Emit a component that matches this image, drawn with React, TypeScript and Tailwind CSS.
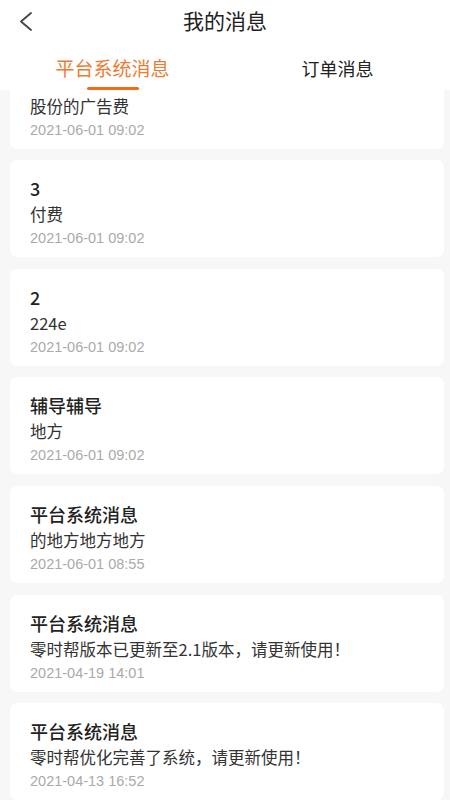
import { useState } from "react"

type Message = {
  id: number
  title: string
  content: string
  time: string
}

// first item is scrolled partly under the tab bar, only its lower half shows
const partial = { content: "股份的广告费", time: "2021-06-01 09:02" }

const messages: Message[] = [
  { id: 2, title: "3", content: "付费", time: "2021-06-01 09:02" },
  { id: 3, title: "2", content: "224e", time: "2021-06-01 09:02" },
  { id: 4, title: "辅导辅导", content: "地方", time: "2021-06-01 09:02" },
  { id: 5, title: "平台系统消息", content: "的地方地方地方", time: "2021-06-01 08:55" },
  { id: 6, title: "平台系统消息", content: "零时帮版本已更新至2.1版本，请更新使用！", time: "2021-04-19 14:01" },
  { id: 7, title: "平台系统消息", content: "零时帮优化完善了系统，请更新使用！", time: "2021-04-13 16:52" },
]

const tabs = ["平台系统消息", "订单消息"]

const dateFont = { fontFamily: '"Liberation Sans", Arial, sans-serif' }

export default function App() {
  const [activeTab, setActiveTab] = useState(0)

  return (
    <div
      className="w-[450px] h-[800px] overflow-hidden flex flex-col bg-[#f7f7f7]"
      style={{ fontFamily: '"Noto Sans CJK SC", "Noto Sans", sans-serif' }}
    >
      {/* header */}
      <div className="relative h-[42px] bg-white flex items-center justify-center shrink-0">
        <button className="absolute left-[16px] top-[9px] w-[20px] h-[24px] flex items-center justify-center">
          <svg width="16" height="20" viewBox="0 0 16 20" fill="none">
            <polyline points="13,2 3,10.5 13,19" stroke="#444" strokeWidth="1.8" strokeLinecap="round" strokeLinejoin="round" />
          </svg>
        </button>
        <h1 className="text-[21px] leading-[28px] text-[#222] mt-[-2px]">我的消息</h1>
      </div>

      {/* tabs */}
      <div className="h-[48px] bg-white flex shrink-0">
        {tabs.map((tab, i) => (
          <button
            key={tab}
            onClick={() => setActiveTab(i)}
            className="flex-1 flex flex-col items-center pt-[12px]"
          >
            <span
              className={
                i === activeTab
                  ? "text-[19px] leading-[28px] text-[#ee7b30]"
                  : "text-[18px] leading-[28px] text-[#222]"
              }
            >
              {tab}
            </span>
            <span
              className={
                i === activeTab
                  ? "mt-[5px] w-[52px] h-[3px] rounded-full bg-[#f26a14]"
                  : "mt-[5px] w-[52px] h-[3px] bg-transparent"
              }
            />
          </button>
        ))}
      </div>

      {/* list */}
      <div className="flex-1 overflow-hidden flex flex-col gap-[11.6px]">
        <div className="ml-[10px] w-[434px] h-[58.6px] shrink-0 bg-white rounded-b-[7px] pt-[6px] pl-[20px] flex flex-col">
          <p className="text-[16.5px] leading-[20px] text-[#333]">{partial.content}</p>
          <p className="mt-[4px] text-[14.5px] leading-[20px] text-[#aaaaaa]" style={dateFont}>
            {partial.time}
          </p>
        </div>
        {messages.map((m) => (
          <div
            key={m.id}
            className="ml-[10px] w-[434px] h-[97px] shrink-0 bg-white rounded-[7px] pt-[18px] pl-[20px] flex flex-col"
          >
            <p className="text-[18px] leading-[20px] font-medium text-[#222]">{m.title}</p>
            <p className="mt-[6px] text-[16.5px] leading-[20px] text-[#333]">{m.content}</p>
            <p className="mt-[4px] text-[14.5px] leading-[20px] text-[#aaaaaa]" style={dateFont}>
              {m.time}
            </p>
          </div>
        ))}
      </div>
    </div>
  )
}
